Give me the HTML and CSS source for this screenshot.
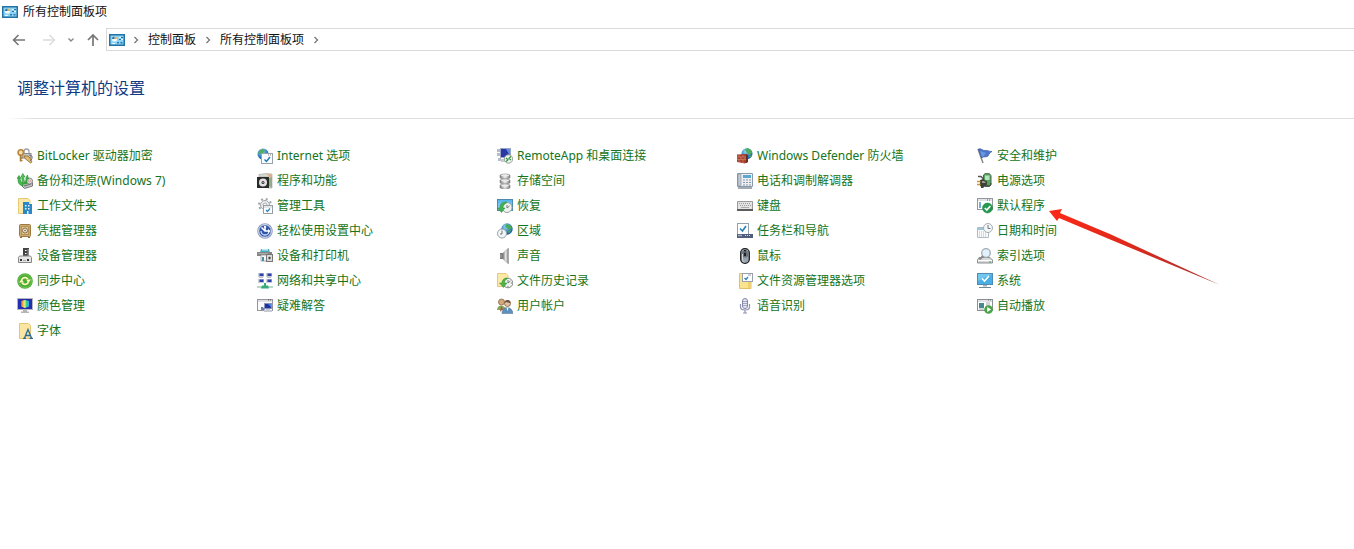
FILE: index.html
```html
<!DOCTYPE html>
<html lang="zh-CN">
<head>
<meta charset="utf-8">
<title>所有控制面板项</title>
<link rel="stylesheet" href="styles.css">
</head>
<body>
<svg class="defs" aria-hidden="true">
  <defs>
    <linearGradient id="sky" x1="0" y1="0" x2="0" y2="1"><stop offset="0" stop-color="#4db2ea"/><stop offset="1" stop-color="#a5e0fa"/></linearGradient>
    <linearGradient id="metal" x1="0" y1="0" x2="1" y2="0"><stop offset="0" stop-color="#777"/><stop offset=".5" stop-color="#ededed"/><stop offset="1" stop-color="#777"/></linearGradient>
    <linearGradient id="hue" x1="0" y1="0" x2="1" y2="0"><stop offset="0" stop-color="#f03b3b"/><stop offset=".35" stop-color="#f4e83a"/><stop offset=".65" stop-color="#3bd07a"/><stop offset="1" stop-color="#35a6f5"/></linearGradient>
    <radialGradient id="globe" cx=".4" cy=".3" r=".8"><stop offset="0" stop-color="#a9def5"/><stop offset=".5" stop-color="#3a8fc8"/><stop offset="1" stop-color="#123f86"/></radialGradient>
    <linearGradient id="pointer" x1="0" y1="0" x2="1" y2="0"><stop offset="0" stop-color="#fb2a17"/><stop offset=".45" stop-color="#e0291b"/><stop offset="1" stop-color="#a8312c"/></linearGradient>
    <symbol id="panel" viewBox="0 0 16 14">
      <rect x=".75" y="1.750" width="14.500" height="10.500" fill="#8bd2f5" stroke="#2272a5" stroke-width="1.500"/>
      <circle cx="5.500" cy="6" r="2.600" fill="#f1fbff"/><path d="M5.500 6V3.400A2.600 2.600 0 0 1 8.100 6Z" fill="#e3b04e"/><path d="M5.500 6H2.900A2.600 2.600 0 0 1 5.500 3.400Z" fill="#2474ab"/>
      <path d="M10 4.500h4M10 6.500h4M3 10.500h3" stroke="#e4f7ff"/><path d="M12 4.500h2M10 6.500h2" stroke="#2b6c9d"/><path d="M8 9h2v1.500H8zM11.500 9h2v1.500h-2z" fill="#2b7bae"/>
    </symbol>
    <symbol id="chevron" viewBox="0 0 6 8"><path d="M1.500 1l3 3-3 3" fill="none" stroke="#777" stroke-width="1.300"/></symbol>
  </defs>
</svg>

<header class="titlebar">
  <svg class="panel-icon"><use href="#panel"/></svg>
  <span>所有控制面板项</span>
</header>

<div class="toolbar">
  <div class="history">
    <button class="nav-button" aria-label="后退"><svg width="14" height="12" viewBox="0 0 14 12"><path d="M13 6H1.500M6.500 1l-5 5 5 5" fill="none" stroke="#777" stroke-width="1.600"/></svg></button>
    <button class="nav-button" aria-label="前进"><svg width="14" height="12" viewBox="0 0 14 12"><path d="M1 6h11.500M7.500 1l5 5-5 5" fill="none" stroke="#dcdcdc" stroke-width="1.500"/></svg></button>
    <button class="nav-button small" aria-label="最近位置"><svg width="8" height="6" viewBox="0 0 8 6"><path d="M1.500 1.500L4 4l2.500-2.500" fill="none" stroke="#888" stroke-width="1.400"/></svg></button>
    <button class="nav-button" aria-label="向上"><svg width="14" height="14" viewBox="0 0 14 14"><path d="M7 13V2M2 7l5-5 5 5" fill="none" stroke="#777" stroke-width="1.700"/></svg></button>
  </div>
  <nav class="address" aria-label="地址">
    <svg class="panel-icon"><use href="#panel"/></svg>
    <svg class="chevron"><use href="#chevron"/></svg>
    <button class="crumb">控制面板</button>
    <svg class="chevron"><use href="#chevron"/></svg>
    <button class="crumb">所有控制面板项</button>
    <svg class="chevron"><use href="#chevron"/></svg>
  </nav>
</div>

<main>
  <h1>调整计算机的设置</h1>
  <div class="columns">
    <ul>
      <li><a href="#"><svg viewBox="0 0 16 16"><rect x="5" y="5.500" width="9" height="4.500" fill="#c4c4c4" stroke="#8a8a8a"/><path d="M7 5V3.500a2 2 0 0 1 5 0V5" fill="none" stroke="#a5a5a5" stroke-width="1.300"/><circle cx="3.800" cy="4.500" r="2.700" fill="#f5dfae" stroke="#b98635" stroke-width="1.600"/><path d="M3.500 7v6.500M4 10h1.500M4 12.500h1.500" fill="none" stroke="#ac7a30" stroke-width="1.500"/><path d="M7 8h4l2 2 2 4-1.500 1L8 10.500z" fill="#e0ba68" stroke="#946a30" stroke-width=".8"/><path d="M12 7l3 1v3l-2 2" fill="none" stroke="#777"/></svg>BitLocker 驱动器加密</a></li>
      <li><a href="#"><svg viewBox="0 0 16 16"><path d="M5 10l9-2 1.500 2v3l-8 2.500L5 13z" fill="#c4c4c4" stroke="#777"/><path d="M7 13l7-2" stroke="#666"/><circle cx="12.500" cy="8" r="3" fill="#ddd" stroke="#888"/><circle cx="12.500" cy="8" r="1" fill="#fff" stroke="#b56b6b" stroke-width=".6"/><path d="M6 13C1 12 .5 8 1.500 5L0 5.500 2 2.500 4 5.500 3 5c0 3 1.500 4 3 5z" fill="#45bb48" stroke="#218a2e" stroke-width=".6"/><path d="M6.500 11C5 8 4.500 6 5 3.500L4 4 5.800.5 8 4 6.800 3.500C6.500 6 7.500 8 8 11z" fill="#58c75a" stroke="#218a2e" stroke-width=".6"/><path d="M8.500 11c0-2 0-4 1-6l-.8.300L10.500 2l1 4-1-.5c-.8 2-.8 3-.5 5z" fill="#45bb48" stroke="#218a2e" stroke-width=".6"/></svg>备份和还原(Windows 7)</a></li>
      <li><a href="#"><svg viewBox="0 0 16 16"><path d="M1.500.5H11l2 2v13H1.500z" fill="#fae9ab" stroke="#e6c877"/><path d="M6 4h6v2h3v10H6z" fill="#2a88c7"/><path d="M8 7h1.500v1.500H8zm3 0h1.500v1.500H11zM8 10h1.500v1.500H8zm3 0h1.500v1.500H11zM10 13h1.500v3H10z" fill="#e8f6ff"/></svg>工作文件夹</a></li>
      <li><a href="#"><svg viewBox="0 0 16 16"><rect x="2.500" y="1.500" width="11" height="12" rx="1" fill="#caa972" stroke="#9d7a41"/><rect x="4.500" y="3.500" width="7" height="8" fill="#dfc58d" stroke="#b59457"/><circle cx="8" cy="7.500" r="2.500" fill="#e8e4d8" stroke="#8c7147"/><circle cx="8" cy="7.500" r=".8" fill="#75572e"/><path d="M3 14.500h2m6 0h2" stroke="#886936"/></svg>凭据管理器</a></li>
      <li><a href="#"><svg viewBox="0 0 16 16"><path d="M6 0h6v8H6z" fill="#444"/><path d="M10.500 1H12v7h-1.500z" fill="#888"/><path d="M8 2h1.500v1H8zm0 3h1.500v1H8z" fill="#fff"/><path d="M1.500 9.500l1-1.500h11l1 1.500v5h-13z" fill="#e6e6e6" stroke="#888"/><path d="M3 11h2v2H3zm7 0h2v2h-2z" fill="#333"/><path d="M6 12.500h3" stroke="#aaa"/></svg>设备管理器</a></li>
      <li><a href="#"><svg viewBox="0 0 16 16"><circle cx="8" cy="8" r="7.800" fill="#4aac36"/><circle cx="8" cy="8" r="6.500" fill="none" stroke="#7cc957" stroke-width=".8"/><path d="M4.500 7A3.800 3.800 0 0 1 11 6M11.500 9A3.800 3.800 0 0 1 5 10" fill="none" stroke="#fff6b8" stroke-width="1.800"/><path d="M9 6.500h5L11.500 10zM7 9.500H2L4.500 6z" fill="#fff6b8"/></svg>同步中心</a></li>
      <li><a href="#"><svg viewBox="0 0 16 16"><rect x=".5" y=".5" width="15" height="11" fill="#232fae" stroke="#b5b5bd"/><path d="M4 3l4-1 4 1v5.500l-4 1.500-4-1.500z" fill="url(#hue)"/><path d="M8 2v8" stroke="#fff" stroke-width=".6"/><path d="M6 12h4v1.500h2V15H4v-1.500h2z" fill="#b5b5b5"/></svg>颜色管理</a></li>
      <li><a href="#"><svg viewBox="0 0 16 16"><path d="M2.500.500h9l2 2v13h-11z" fill="#fae6a0" stroke="#e6c571"/><path d="M6 15.500h3m3.500 0H16M7.500 15l3.500-8.500 3.500 8.500M9 12.500h4" fill="none" stroke="#2b6b9c" stroke-width="1.300"/></svg>字体</a></li>
    </ul>
    <ul>
      <li><a href="#"><svg viewBox="0 0 16 16"><circle cx="6" cy="6" r="5.500" fill="url(#globe)"/><path d="M3 2l3-1 2 2-2 2-3 1-2-1zM4 7l3 1-2 3z" fill="#54ad60"/><rect x="4.500" y="5.500" width="11" height="10" fill="#fafcff" stroke="#9aa2a9"/><path d="M11 7h1m1 0h1" stroke="#777"/><path d="M7.500 11.500l2 2 3.500-4.500" fill="none" stroke="#1779ba" stroke-width="1.400"/></svg>Internet 选项</a></li>
      <li><a href="#"><svg viewBox="0 0 16 16"><path d="M2 1.500L9 .5l6 .5v14h-4V4H2z" fill="#d7d7d2" stroke="#aaa" stroke-width=".7"/><path d="M10 1l5 .5V5l-3-1z" fill="#e0ac8c"/><path d="M12 5l3-1v11l-3-2z" fill="#8fae86"/><rect x="0" y="4" width="12" height="11" fill="#2a2a2a"/><circle cx="6" cy="9.500" r="4" fill="#e2e2e2"/><circle cx="6" cy="9.500" r="1.500" fill="#333"/><circle cx="6" cy="9.500" r=".6" fill="#eee"/></svg>程序和功能</a></li>
      <li><a href="#"><svg viewBox="0 0 16 16"><circle cx="8" cy="7" r="6" fill="none" stroke="#a0a5a9" stroke-width="2" stroke-dasharray="2 2.710"/><circle cx="8" cy="7" r="4.500" fill="#eceeef" stroke="#a0a5a9"/><circle cx="8" cy="7" r="2" fill="#fff" stroke="#aaa"/><rect x="6.500" y="7.500" width="9" height="8" fill="#fff" stroke="#979ea4"/><path d="M7 9h8" stroke="#c9ced2"/><path d="M9 12l1.500 1.500 2.500-3" fill="none" stroke="#2d86bf" stroke-width="1.200"/></svg>管理工具</a></li>
      <li><a href="#"><svg viewBox="0 0 16 16"><circle cx="8" cy="8" r="7.800" fill="#8f9dbb"/><circle cx="8" cy="8" r="6.300" fill="#2f56a8" stroke="#e6ecf8"/><path d="M4 8a4 4 0 1 0 8 0" fill="none" stroke="#d5e3ff" stroke-width="1.300"/><path d="M8 3v5M4.500 4.500L8 8h4.500" fill="none" stroke="#fff" stroke-width="1.600"/><path d="M11 6l2.500 2L11 10M6.500 4.500L8 2.500l1.500 2" fill="#fff"/></svg>轻松使用设置中心</a></li>
      <li><a href="#"><svg viewBox="0 0 16 16"><path d="M4 1h8l1 3.500H3z" fill="#4baec2"/><path d="M5 1h6v1.500H5z" fill="#b9edf2"/><path d="M0 4h15v4H0z" fill="#858585"/><path d="M1 5.500h10" stroke="#aaa"/><path d="M4 7h6v6H4z" fill="#f6f6f6" stroke="#999" stroke-width=".8"/><path d="M5 9h2v4H5z" fill="#4b8ca8"/><rect x="9.500" y="6.500" width="6" height="7" fill="#d7d7d7" stroke="#777"/><circle cx="12.500" cy="10" r="1.700" fill="#444" stroke="#fff" stroke-width=".7"/></svg>设备和打印机</a></li>
      <li><a href="#"><svg viewBox="0 0 16 16"><path d="M1 0h6v4H1zm8 0h6v4H9zM1 6h6v4H1zm8 0h6v4H9z" fill="#c6cedb"/><path d="M2.500.5h4V3h-4zm8 0h4V3h-4zM2.500 6.500h4V9h-4zm8 0h4V9h-4z" fill="#2f3fa8"/><path d="M2 4.500h4m4 0h4" stroke="#bbb"/><path d="M0 14h16" stroke="#9fcdb8" stroke-width="1.500"/><path d="M5 12.500h2V10h2v2.500h2l1 3H4z" fill="#36ab78"/></svg>网络和共享中心</a></li>
      <li><a href="#"><svg viewBox="0 0 16 16"><rect x=".5" y="1.500" width="15" height="11" fill="#fafafa" stroke="#9595a0"/><path d="M1 3h14" stroke="#c6c6cf"/><path d="M11 2h1m1 0h1" stroke="#555"/><rect x="7.500" y="5.500" width="7" height="5" fill="#1f329f" stroke="#8994bd"/><path d="M11 6h3v3z" fill="#4b83dc"/><path d="M9 11h4v1h2v2H7v-2h2z" fill="#c6cad2"/><path d="M4 9v3h4l-2-3z" fill="#6a7eae"/></svg>疑难解答</a></li>
    </ul>
    <ul>
      <li><a href="#"><svg viewBox="0 0 16 16"><path d="M0 1h3v3H0zm0 4h3v3H0zm1 5h3v3H1z" fill="#b6bcc9"/><rect x="3.500" y=".5" width="10" height="9" fill="#2a38a3" stroke="#9aa4c7"/><path d="M9 1h4v7z" fill="#5b91df"/><path d="M4 11h5v3H4z" fill="#c5cbd1"/><circle cx="11.500" cy="11" r="4.200" fill="#eff2ed" stroke="#97a097"/><path d="M9 10l2 1.800-2 1.800M14 8.500l-2 1.800 2 1.800" fill="none" stroke="#2f9440" stroke-width="1.200"/></svg>RemoteApp 和桌面连接</a></li>
      <li><a href="#"><svg viewBox="0 0 16 16"><path d="M3 2.500c0-2 10-2 10 0v2c0 2-10 2-10 0zM3 7.500c0-2 10-2 10 0v2c0 2-10 2-10 0zM3 12.500c0-2 10-2 10 0v2c0 2-10 2-10 0z" fill="url(#metal)" stroke="#888" stroke-width=".6"/><path d="M4 2.500c0-1.300 8-1.300 8 0s-8 1.300-8 0zM4 7.500c0-1.300 8-1.300 8 0s-8 1.300-8 0zM4 12.500c0-1.300 8-1.300 8 0s-8 1.300-8 0z" fill="#ececec"/></svg>存储空间</a></li>
      <li><a href="#"><svg viewBox="0 0 16 16"><rect x=".5" y="1.500" width="15" height="11" fill="url(#sky)" stroke="#4d88b0"/><circle cx="10" cy="9.500" r="5" fill="#eff3f0" stroke="#97a39d"/><path d="M10 7v3l2.500-2" fill="none" stroke="#777"/><path d="M9.500 4C5 3.500 2.500 6.500 3 10H.5l4 4.500L8 10H6c0-2 1-4 3.500-5z" fill="#45b057" stroke="#238a3a" stroke-width=".5"/></svg>恢复</a></li>
      <li><a href="#"><svg viewBox="0 0 16 16"><circle cx="10" cy="6" r="5.700" fill="url(#globe)"/><path d="M9 1l4 1 2 3-3 2-2-2-2-1zM11 8l3-1-2 4z" fill="#49a95c"/><circle cx="5" cy="10.500" r="4.500" fill="#f2f5f6" stroke="#93a1aa"/><path d="M5 7.500v3.500H3" fill="none" stroke="#6a7981"/></svg>区域</a></li>
      <li><a href="#"><svg viewBox="0 0 16 16"><path d="M3 5h3v6H3z" fill="#777"/><path d="M6 5l5.500-5v16L6 11z" fill="url(#metal)" stroke="#999" stroke-width=".5"/><path d="M4 6v4" stroke="#aaa"/></svg>声音</a></li>
      <li><a href="#"><svg viewBox="0 0 16 16"><path d="M.5.500H9l2 2v11H.5z" fill="#fbe9a5" stroke="#e6c97a"/><circle cx="11" cy="10" r="4.800" fill="#eff2f1" stroke="#858e89"/><path d="M11 7v3l2.500-2M11 13v1M14 10h1" fill="none" stroke="#777"/><path d="M10 5C7 5 5 7 5 10H2.500l4 4.500L10 10H7.500c0-2 .5-3 2.500-4z" fill="#50b548" stroke="#2d8d33" stroke-width=".5"/></svg>文件历史记录</a></li>
      <li><a href="#"><svg viewBox="0 0 16 16"><circle cx="4.500" cy="4" r="3" fill="#d6a97a" stroke="#8b6546" stroke-width=".8"/><path d="M0 12c0-6 8-6 9 0z" fill="#8aa454"/><path d="M4 8l2 3-3 3z" fill="#a15b4b"/><path d="M5 15.500c0-8 10-8 11 0z" fill="#5b90bf" stroke="#527089" stroke-width=".5"/><circle cx="10.500" cy="5.500" r="3" fill="#e4bf9a" stroke="#7c5d48" stroke-width=".8"/><path d="M9.500 9.500l1 3.500 1-3.500z" fill="#fff"/><path d="M7.500 5c0-4 6-4 6 0-2 0-3-1-4-1z" fill="#71523f"/></svg>用户帐户</a></li>
    </ul>
    <ul>
      <li><a href="#"><svg viewBox="0 0 16 16"><circle cx="10" cy="5.700" r="5.500" fill="url(#globe)"/><path d="M8 1l3-1 3 2 1 3-3 2-3-3zM12 8l3-1-2 3z" fill="#51ad5f"/><path d="M0 6.500L9 6l2 1v7l-3 1.500L0 14z" fill="#a6422e"/><path d="M0 9h11M0 11.500h11M2 7v2M6 7v2M4 9v2.500M8 9v2.500M2 11.500V14M6 11.500V15" stroke="#d98e76" stroke-width=".6"/><path d="M9 6v9l2-1V7z" fill="#6b2d25"/></svg>Windows Defender 防火墙</a></li>
      <li><a href="#"><svg viewBox="0 0 16 16"><path d="M.5.500h15v13H.5z" fill="#edf0f4" stroke="#8a9aa9"/><rect x="1" y="1" width="3" height="12" rx="1" fill="#c3ccd6" stroke="#7a8c9c" stroke-width=".6"/><path d="M6 2h8v3H6z" fill="#5ba9cf"/><path d="M6 7h8M6 9.500h8M6 12h8" stroke="#8593a3" stroke-dasharray="2 1"/><path d="M1 15h14" stroke="#858e97" stroke-width="1.500"/></svg>电话和调制解调器</a></li>
      <li><a href="#"><svg viewBox="0 0 16 16"><path d="M.5 3.500h15v8H.5z" fill="#e4e4e4" stroke="#999"/><path d="M2 5.500h12M3 7.500h11" stroke="#999" stroke-dasharray="1 1"/><path d="M4 9.500h8" stroke="#aaa"/><path d="M0 11h16v2H0z" fill="#5c5c5c"/></svg>键盘</a></li>
      <li><a href="#"><svg viewBox="0 0 16 16"><rect x=".5" y=".5" width="11" height="11" fill="#fff" stroke="#93a0ae"/><path d="M3 5.500l2.500 2.500L9 3" fill="none" stroke="#2480ba" stroke-width="1.600"/><path d="M0 11h16v4H0z" fill="#525f7c"/><path d="M1 12.500h4" stroke="#9dafc9" stroke-width="1.500"/><path d="M8 12.500h6" stroke="#cdd6e4" stroke-dasharray="1 1"/></svg>任务栏和导航</a></li>
      <li><a href="#"><svg viewBox="0 0 16 16"><rect x="3.700" y=".7" width="8.600" height="14.600" rx="4" fill="#9aa4af" stroke="#222" stroke-width="1.300"/><path d="M5 5c0-4 6-4 6 0v3c-1 2-5 2-6 0z" fill="#69737e"/><path d="M8 2v6" stroke="#222" stroke-width="2"/><path d="M8 3v2" stroke="#7f97aa"/><path d="M5.500 6v5c0 2 1 3 2 3" fill="none" stroke="#cfd6de"/></svg>鼠标</a></li>
      <li><a href="#"><svg viewBox="0 0 16 16"><path d="M2.500.500H12l2 2v13H2.500z" fill="#f9e38f" stroke="#e2c064"/><path d="M12 9v6" stroke="#e6bd49"/><rect x="5.500" y=".5" width="10" height="8" fill="#fff" stroke="#98a0ab"/><path d="M7.500 5L9 6.500 11 4" fill="none" stroke="#2b85c0" stroke-width="1.300"/><path d="M11 2h3" stroke="#929cab"/></svg>文件资源管理器选项</a></li>
      <li><a href="#"><svg viewBox="0 0 16 16"><path d="M3.500 6v3c0 4 9 4 9 0V6M8 12v3M6 15h4" fill="none" stroke="#8f92b5" stroke-width="1.200"/><rect x="5.500" y=".5" width="5" height="10" rx="2.500" fill="#e6e7f0" stroke="#8386a8"/><path d="M6 3.500h4M6 5.500h4M6 7.500h4" stroke="#9295b8" stroke-width=".8"/></svg>语音识别</a></li>
    </ul>
    <ul>
      <li><a href="#"><svg viewBox="0 0 16 16"><path d="M1 1l5 14" stroke="#888" stroke-width="1.500"/><path d="M1.500 1c3-1 4 2 7 1.500 2-.5 3 1 6.500 1-2 1-3 2.500-4 4.500-2 1.500-4 0-6.500 2z" fill="#4b76ca" stroke="#3457a5" stroke-width=".7"/><path d="M3 3c2 0 3 2 6 1.500L7 8 5 9z" fill="#6a95df"/></svg>安全和维护</a></li>
      <li><a href="#"><svg viewBox="0 0 16 16"><path d="M6.500 2L8 .7h4.500l1.500 2V12l-1.500 1.500H8L6.500 12z" fill="#55a55e" stroke="#4c6352"/><path d="M8 2.500h4.500V7H8z" fill="#b4e3bc"/><path d="M1 3.500h3l3 3" fill="none" stroke="#555" stroke-width="1.500"/><path d="M3 7l3-1 4 2.500v3L6 15H4v-1.500L3 13z" fill="#3d423a"/><path d="M0 8.500h3.500M0 11.500h3.500" stroke="#c89b38" stroke-width="1.400"/><path d="M5 8h2l1.500 1v1H5z" fill="#9c9e88"/><path d="M9 12c3 2 5 0 5-2" fill="none" stroke="#444"/></svg>电源选项</a></li>
      <li><a href="#"><svg viewBox="0 0 16 16"><rect x=".5" y=".5" width="15" height="11" fill="#fff" stroke="#92989d"/><path d="M1 2h14" stroke="#c4c9ce"/><path d="M10 2h1m1 0h1" stroke="#666"/><path d="M2 4h2v6H2z" fill="#74b0d6"/><circle cx="10.500" cy="10" r="5" fill="#23994f" stroke="#16803b" stroke-width=".5"/><path d="M7.800 10l2 2 3.500-4" fill="none" stroke="#fff" stroke-width="1.600"/></svg>默认程序</a>
        <svg class="pointer" viewBox="0 0 172 78" aria-hidden="true"><path d="M0 2L13 0 11 4 62 25.500 171 76 60 30 10 9 8 12z" fill="url(#pointer)"/></svg></li>
      <li><a href="#"><svg viewBox="0 0 16 16"><path d="M.5 4.500h11v10H.5z" fill="#f8fafb" stroke="#b0bbc4"/><path d="M1 6h10" stroke="#9bc6dc" stroke-width="2"/><path d="M2 9h8M2 11h8M2 13h8" stroke="#a3bfd0" stroke-dasharray="1 1"/><circle cx="11" cy="5" r="4.500" fill="#f4f6f7" stroke="#a3adb4"/><path d="M11 2v3.500h2.500" fill="none" stroke="#6d7880"/></svg>日期和时间</a></li>
      <li><a href="#"><svg viewBox="0 0 16 16"><path d="M2 9.500h11l2.500 2.500v3H.5v-3z" fill="#d6d8da" stroke="#8b9094"/><path d="M1 12.500h14" stroke="#fff"/><path d="M12 14h2" stroke="#43ab58"/><circle cx="9" cy="5" r="4.300" fill="#e2f1fb" stroke="#a0abb4" stroke-width="1.300"/><path d="M6 8l-3.500 3.500" stroke="#888" stroke-width="2"/></svg>索引选项</a></li>
      <li><a href="#"><svg viewBox="0 0 16 16"><rect x=".5" y=".5" width="15" height="11" fill="#48aee5" stroke="#4f8cb3"/><path d="M1 1h14L1 8z" fill="#73c7ef"/><path d="M5 5.500l2.500 2.500L12 3" fill="none" stroke="#fff" stroke-width="1.600"/><path d="M6 12h4v1.500H6z" fill="#a2b0ba"/><path d="M2 14.500h12" stroke="#708795"/></svg>系统</a></li>
      <li><a href="#"><svg viewBox="0 0 16 16"><rect x=".5" y="1.500" width="15" height="11" fill="#fff" stroke="#8b9197"/><path d="M1 3h14" stroke="#c1c7cc"/><path d="M11 2h1m1 0h1" stroke="#666"/><path d="M2 5h5v5H2z" fill="#468a91"/><path d="M9 5h4M9 7h4M2 11h5" stroke="#aaa"/><circle cx="11.500" cy="11.500" r="4.300" fill="#48a446"/><path d="M10.200 9l4 2.500-4 2.500z" fill="#fff"/></svg>自动播放</a></li>
    </ul>
  </div>
</main>
</body>
</html>
```
FILE: styles.css
```css
* {
  box-sizing: border-box;
}

body {
  margin: 0;
  background: #fff;
  color: #111;
  font: 12px/16px "Noto Sans", "Noto Sans CJK SC", sans-serif;
  overflow-x: hidden;
}

svg {
  flex: none;
  display: block;
}

.defs {
  position: absolute;
  width: 0;
  height: 0;
}

.titlebar {
  display: flex;
  align-items: center;
  gap: 5px;
  height: 23px;
  padding-left: 2px;
}

.panel-icon {
  width: 16px;
  height: 14px;
}

.toolbar {
  display: flex;
  align-items: center;
  margin-top: 5px;
}

.history {
  display: flex;
  flex: none;
  align-items: center;
  gap: 6px;
  padding: 0 1px 0 7px;
}

.nav-button {
  display: flex;
  align-items: center;
  justify-content: center;
  width: 24px;
  height: 22px;
  padding: 0;
  border: 0;
  background: none;
}

.nav-button.small {
  width: 8px;
}

.address {
  display: flex;
  flex: 1;
  align-items: center;
  height: 23px;
  padding-left: 2px;
  border: 1px solid #d9d9d9;
  border-right: 0;
}

.chevron {
  width: 6px;
  height: 8px;
  margin: 0 9px 0 8px;
}

.crumb + .chevron {
  margin-left: 9px;
}

.crumb {
  padding: 0;
  border: 0;
  background: none;
  color: inherit;
  font: inherit;
}

h1 {
  margin: 0 0 0 9px;
  padding: 25px 0 18px 8px;
  border-bottom: 1px solid;
  border-image: linear-gradient(to right, #fff, #dedede 24px) 1;
  color: #0f3d85;
  font-size: 16px;
  font-weight: 400;
  line-height: 24px;
}

.columns {
  display: flex;
  padding: 24px 0 24px 17px;
}

ul {
  flex: none;
  width: 240px;
  margin: 0;
  padding: 0;
  list-style: none;
}

li {
  position: relative;
  height: 25px;
  display: flex;
  align-items: center;
}

a {
  display: flex;
  align-items: center;
  gap: 4px;
  color: #157420;
  text-decoration: none;
  white-space: nowrap;
}

a svg {
  width: 16px;
  height: 16px;
}

.pointer {
  position: absolute;
  top: 16px;
  left: 72px;
  width: 172px;
  height: 78px;
  pointer-events: none;
}
```
